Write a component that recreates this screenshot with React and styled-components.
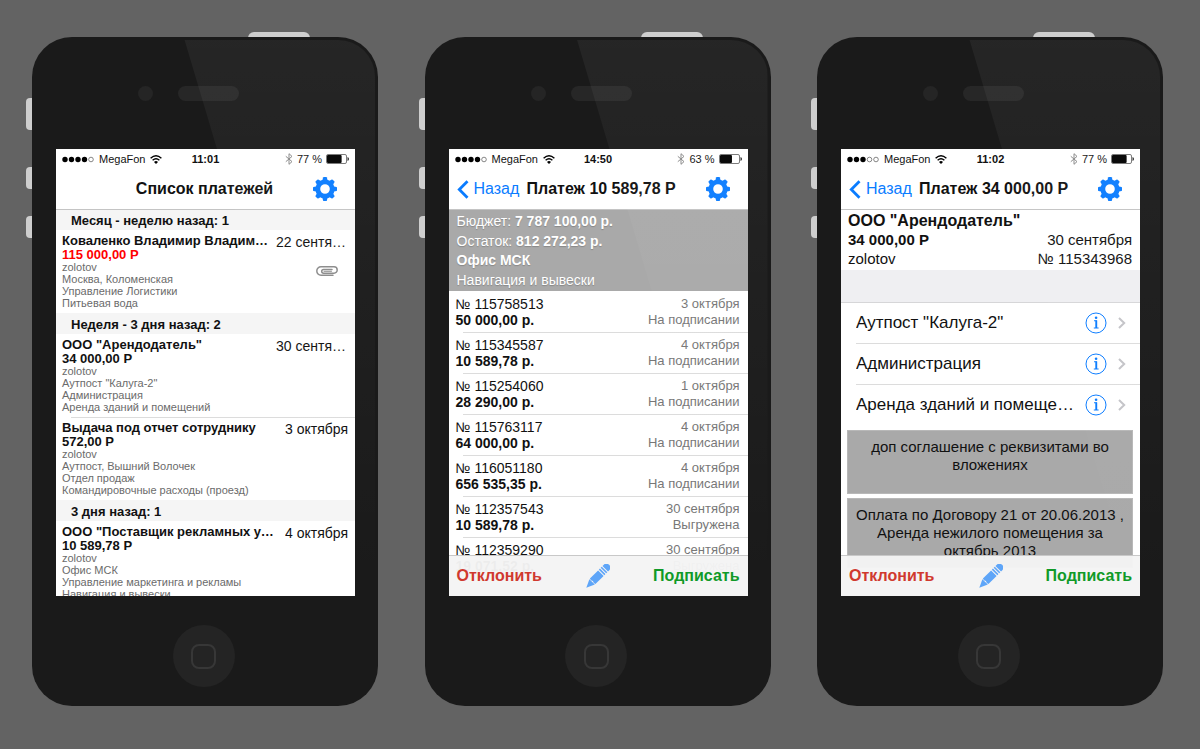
import React from 'react';
import styled, { createGlobalStyle } from 'styled-components';

const Global = createGlobalStyle`
  *, *::before, *::after { box-sizing: border-box; }
  body {
    margin: 0;
    background: #636363;
    font-family: "Liberation Sans", Arial, sans-serif;
    color: #111;
  }
  h1, h2, p, ul, dl, dd { margin: 0; padding: 0; }
  ul { list-style: none; }
`;

const Stage = styled.main`
  display: flex;
  flex-wrap: wrap;
  justify-content: space-between;
  gap: 40px;
  min-height: 100vh;
  padding: 37px 37px 37px 32px;
`;

const Device = styled.article`
  position: relative;
  flex: 0 1 346px;
  min-width: 320px;
  align-self: flex-start;
`;

const TopKey = styled.span`
  position: absolute;
  top: -5px;
  right: 68px;
  width: 62px;
  height: 16px;
  border-radius: 6px;
  background: #cecece;
`;

const SideKey = styled.span`
  position: absolute;
  left: -6px;
  top: ${(p) => p.$top}px;
  width: 16px;
  height: ${(p) => p.$h}px;
  border-radius: 4px;
  background: #cecece;
`;

const Body = styled.div`
  position: relative;
  display: flex;
  flex-direction: column;
  padding: 0 23px 0 24px;
  border-radius: 40px;
  background: #1a1a1a;
`;

const Glare = styled.div`
  position: absolute;
  inset: 3px;
  border-radius: 37px;
  background: linear-gradient(rgba(255, 255, 255, 0.05), rgba(255, 255, 255, 0.03) 30%, rgba(255, 255, 255, 0) 82%);
  clip-path: polygon(44% 0, 100% 0, 100% 100%, 102% 100%);
  pointer-events: none;
`;

const Forehead = styled.div`
  display: flex;
  align-items: center;
  gap: 25px;
  height: 112px;
  padding-left: 82px;
`;

const Camera = styled.span`
  width: 15px;
  height: 15px;
  border-radius: 50%;
  background: #252525;
`;

const Speaker = styled.span`
  width: 61px;
  height: 15px;
  border-radius: 8px;
  background: #272727;
`;

const Chin = styled.div`
  display: grid;
  place-items: center;
  height: 110px;
  padding: 10px 4px 0 0;
`;

const HomeButton = styled.button`
  display: grid;
  place-items: center;
  width: 62px;
  height: 62px;
  padding: 0;
  border: 0;
  border-radius: 50%;
  background: #242424;
  &::before {
    content: "";
    width: 25px;
    height: 25px;
    border: 2px solid #373737;
    border-radius: 8px;
  }
`;

const Screen = styled.section`
  display: flex;
  flex-direction: column;
  height: 447px;
  overflow: hidden;
  background: #fff;
`;

const StatusBar = styled.div`
  display: grid;
  grid-template-columns: 1fr auto 1fr;
  align-items: center;
  flex: none;
  height: 20px;
  padding: 0 6px;
  font-size: 11px;
  line-height: 20px;
`;

const StatusGroup = styled.div`
  display: flex;
  align-items: center;
  justify-content: ${(p) => (p.$end ? 'flex-end' : 'flex-start')};
  gap: ${(p) => (p.$end ? 4 : 5)}px;
  white-space: nowrap;
`;

const Clock = styled.strong`
  font-size: 11px;
`;

const NavBar = styled.header`
  position: relative;
  display: grid;
  grid-template-columns: ${(p) => (p.$back ? '70px 1fr 40px' : '40px 1fr 40px')};
  align-items: center;
  flex: none;
  height: 40px;
  padding: 0 10px 0 8px;
  box-shadow: 0 1px 0 #c4c4c4;
`;

const Title = styled.h1`
  font-size: 16px;
  line-height: 20px;
  font-weight: 700;
  white-space: nowrap;
  text-align: ${(p) => (p.$left ? 'left' : 'center')};
`;

const PlainButton = styled.button`
  display: flex;
  align-items: center;
  justify-content: center;
  gap: 5px;
  padding: 0;
  border: 0;
  background: none;
  color: #0a7cff;
  font: 16px/20px "Liberation Sans", Arial, sans-serif;
`;

const BackButton = styled(PlainButton)`
  justify-content: flex-start;
`;

const Scroll = styled.div`
  flex: 1;
  min-height: 0;
  overflow: hidden;
`;

const SectionTitle = styled.h2`
  height: 21px;
  padding-left: 15px;
  background: #f5f5f5;
  font-size: 13px;
  line-height: 23px;
`;

const Payment = styled.li`
  position: relative;
  display: flex;
  justify-content: space-between;
  gap: 6px;
  height: 83px;
  padding: 4px 7px 0 6px;
  & + &::before {
    content: "";
    position: absolute;
    inset: 0 0 auto 15px;
    border-top: 1px solid #dcdcdc;
  }
`;

const PayInfo = styled.div`
  flex: 1;
  min-width: 0;
  color: #6b6b6b;
  font-size: 11px;
  line-height: 12px;
`;

const Payee = styled.strong`
  display: block;
  overflow: hidden;
  color: #111;
  font-size: 13px;
  line-height: 14px;
  white-space: nowrap;
  text-overflow: ellipsis;
`;

const Sum = styled.strong`
  display: block;
  color: ${(p) => (p.$late ? '#f00' : '#111')};
  font-size: 13px;
  line-height: 13px;
`;

const PaySide = styled.div`
  display: flex;
  flex-direction: column;
  align-items: flex-end;
  gap: 16px;
  max-width: 72px;
`;

const PayDate = styled.time`
  max-width: 100%;
  overflow: hidden;
  font-size: 14px;
  line-height: 16px;
  white-space: nowrap;
  text-overflow: ellipsis;
`;

const Attachment = styled.span`
  display: flex;
  padding-right: 10px;
`;

const Budget = styled.div`
  display: grid;
  align-content: space-between;
  flex: none;
  height: 82px;
  padding: 3px 8px 2px;
  background: #a9a9a9;
  color: #fff;
  font-size: 14px;
  line-height: 18px;
  text-shadow: 0 1px 1px #888;
`;

const Order = styled.li`
  position: relative;
  display: grid;
  grid-template-columns: 1fr auto;
  align-content: start;
  height: 41px;
  padding: 5px 8px 0 7px;
  line-height: 16px;
  font-size: 14px;
  & + &::before {
    content: "";
    position: absolute;
    inset: 0 0 auto 14px;
    border-top: 1px solid #dcdcdc;
  }
`;

const Note = styled.span`
  color: #777;
  font-size: 13px;
  text-align: right;
`;

const Toolbar = styled.footer`
  position: relative;
  display: grid;
  grid-template-columns: 1fr auto 1fr;
  align-items: center;
  flex: none;
  height: 41px;
  margin-top: -41px;
  padding: 0 8px;
  border-top: 1px solid #c8c8c8;
  background: rgba(244, 244, 244, 0.97);
`;

const Action = styled(PlainButton)`
  justify-self: ${(p) => (p.$approve ? 'end' : 'start')};
  color: ${(p) => (p.$approve ? '#109a28' : '#d0392e')};
  font-weight: 700;
`;

const Summary = styled.div`
  display: grid;
  grid-template-columns: auto 1fr;
  align-content: start;
  height: 61px;
  padding: 3px 8px 0 7px;
  font-size: 15px;
  line-height: 19px;
`;

const Recipient = styled.strong`
  grid-column: 1 / -1;
  font-size: 16px;
  line-height: 18px;
`;

const RightText = styled.span`
  text-align: right;
`;

const Spacer = styled.div`
  height: 33px;
  border-bottom: 1px solid #d6d6d8;
  background: #efeff2;
`;

const Detail = styled.li`
  display: flex;
  align-items: center;
  height: 41px;
  margin-left: 15px;
  padding-right: 14px;
  border-bottom: 1px solid ${(p) => (p.$last ? 'transparent' : '#dcdcdc')};
  font-size: 17px;
`;

const DetailName = styled.span`
  flex: 1;
  min-width: 0;
  max-width: 218px;
  overflow: hidden;
  white-space: nowrap;
  text-overflow: ellipsis;
`;

const DetailLinks = styled.span`
  display: flex;
  align-items: center;
  gap: 11px;
  margin-left: auto;
`;

const Comment = styled.p`
  min-height: 64px;
  margin: 4px 7px 0 6px;
  padding: 7px 4px;
  border: 1px solid #b8b8b8;
  background: #a9a9a9;
  font-size: 15px;
  line-height: 18px;
  text-align: center;
`;

const Gear = () => (
  <svg width="24" height="24" viewBox="-12 -12 24 24" aria-hidden="true">
    <g fill="#0a7cff">
      {[0, 45, 90, 135, 180, 225, 270, 315].map((a) => (
        <path key={a} transform={`rotate(${a})`} d="M-2.8-8L-1.9-11.5Q-1.7-12-1.2-12H1.2Q1.7-12 1.9-11.5L2.8-8Z" />
      ))}
    </g>
    <circle r="7.2" fill="none" stroke="#0a7cff" strokeWidth="4.8" />
  </svg>
);

const Signal = ({ level }) => (
  <svg width="32" height="7" viewBox="0 0 32 7" aria-hidden="true">
    {[0, 1, 2, 3, 4].map((i) => (
      <circle key={i} cx={3 + i * 6.5} cy="3.5" r={i < level ? 2.7 : 2.3} fill={i < level ? '#000' : 'none'} stroke={i < level ? 'none' : '#555'} strokeWidth="0.7" />
    ))}
  </svg>
);

const Wifi = () => (
  <svg width="12" height="9" viewBox="0 0 12 9" fill="none" stroke="#000" strokeWidth="1.4" aria-hidden="true">
    <path d="M.6 3.2Q6-1.6 11.4 3.2M2.6 5.3Q6 2.2 9.4 5.3" />
    <path d="M6 9L4 6.9Q6 5.3 8 6.9Z" fill="#000" stroke="none" />
  </svg>
);

const Bluetooth = () => (
  <svg width="8" height="12" viewBox="0 0 8 12" fill="none" stroke="#888" strokeWidth="1" aria-hidden="true">
    <path d="M.8 3.3L7 8.6L4 11.3V.7L7 3.4L.8 8.7" />
  </svg>
);

const Battery = ({ charge }) => (
  <svg width="23" height="10" viewBox="0 0 23 10" aria-hidden="true">
    <rect x=".5" y=".5" width="20" height="9" rx="1.5" fill="none" stroke="#777" />
    <rect x="1" y="1" width={19 * charge} height="8" rx="1" fill="#000" />
    <path d="M21.5 3Q23 3.5 23 5T21.5 7Z" fill="#222" />
  </svg>
);

const Clip = () => (
  <svg width="22" height="10" viewBox="0 0 22 10" fill="none" stroke="#8b8b8b" strokeWidth="1.5" strokeLinecap="round" aria-hidden="true">
    <path d="M17 9.2H5A4.2 4.2 0 0 1 5 .8H18A3.2 3.2 0 0 1 18 7.2H7.6A1.9 1.9 0 0 1 7.6 3.4H16" />
    <path d="M8 5.3H15.5" strokeWidth="1" />
  </svg>
);

const BackArrow = () => (
  <svg width="12" height="19" viewBox="0 0 12 19" fill="none" stroke="#0a7cff" strokeWidth="2.8" aria-hidden="true">
    <path d="M10.5 1.2L2.3 9.5L10.5 17.8" />
  </svg>
);

const Pencil = () => (
  <svg width="24" height="24" viewBox="0 0 24 24" aria-hidden="true">
    <g transform="translate(.3 23.7) rotate(-45)" fill="#5ea5f8">
      <path d="M0 0L8.2-3.8V3.8Z" />
      <path d="M9-3.9H20.6V3.9H9L8.6 2L9.4 0L8.6-2Z" />
      <path d="M21.6-3.9H23.2V3.9H21.6ZM24.2-3.9H25.8V3.9H24.2ZM26.8-3.9H29Q32.3-3.6 32.3 0T29 3.9H26.8Z" />
    </g>
  </svg>
);

const Info = () => (
  <svg width="22" height="22" viewBox="0 0 22 22" fill="none" stroke="#0a7cff" aria-hidden="true">
    <circle cx="11" cy="11" r="10" />
    <path d="M9 8.8H11.3V16M8.8 16H13.6" strokeWidth="1.1" />
    <path d="M11.3 8.4V16" strokeWidth="1.8" />
    <circle cx="11.1" cy="5.8" r="1.3" fill="#0a7cff" stroke="none" />
  </svg>
);

const Chevron = () => (
  <svg width="8" height="12" viewBox="0 0 8 12" fill="none" stroke="#c4c4c8" strokeWidth="2" aria-hidden="true">
    <path d="M1 1L6.2 6L1 11" />
  </svg>
);

function Phone({ status, title, back, children }) {
  return (
    <Device>
      <TopKey />
      <SideKey $top={61} $h={32} />
      <SideKey $top={130} $h={22} />
      <SideKey $top={179} $h={22} />
      <Body>
        <Forehead><Camera /><Speaker /></Forehead>
        <Screen>
          <StatusBar>
            <StatusGroup><Signal level={status.signal} />MegaFon<Wifi /></StatusGroup>
            <Clock>{status.time}</Clock>
            <StatusGroup $end><Bluetooth />{status.charge} %<Battery charge={status.charge / 100} /></StatusGroup>
          </StatusBar>
          <NavBar $back={back}>
            {back ? <BackButton type="button"><BackArrow />Назад</BackButton> : <span />}
            <Title $left={back}>{title}</Title>
            <PlainButton type="button" aria-label="Настройки"><Gear /></PlainButton>
          </NavBar>
          {children}
        </Screen>
        <Chin><HomeButton type="button" aria-label="Домой" /></Chin>
        <Glare />
      </Body>
    </Device>
  );
}

const Actions = () => (
  <Toolbar>
    <Action type="button">Отклонить</Action>
    <PlainButton type="button" aria-label="Изменить"><Pencil /></PlainButton>
    <Action type="button" $approve>Подписать</Action>
  </Toolbar>
);

const groups = [
  { title: 'Месяц - неделю назад: 1', items: [
    { name: 'Коваленко Владимир Владимирович', date: '22 сентября', sum: '115 000,00 Р', late: true, clip: true, lines: ['Москва, Коломенская', 'Управление Логистики', 'Питьевая вода'] },
  ] },
  { title: 'Неделя - 3 дня назад: 2', items: [
    { name: 'ООО "Арендодатель"', date: '30 сентября', sum: '34 000,00 Р', lines: ['Аутпост "Калуга-2"', 'Администрация', 'Аренда зданий и помещений'] },
    { name: 'Выдача под отчет сотруднику', date: '3 октября', sum: '572,00 Р', lines: ['Аутпост, Вышний Волочек', 'Отдел продаж', 'Командировочные расходы (проезд)'] },
  ] },
  { title: '3 дня назад: 1', items: [
    { name: 'ООО "Поставщик рекламных услуг"', date: '4 октября', sum: '10 589,78 Р', lines: ['Офис МСК', 'Управление маркетинга и рекламы', 'Навигация и вывески'] },
  ] },
];

const orders = [
  ['115758513', '50 000,00 р.', '3 октября', 'На подписании'],
  ['115345587', '10 589,78 р.', '4 октября', 'На подписании'],
  ['115254060', '28 290,00 р.', '1 октября', 'На подписании'],
  ['115763117', '64 000,00 р.', '4 октября', 'На подписании'],
  ['116051180', '656 535,35 р.', '4 октября', 'На подписании'],
  ['112357543', '10 589,78 р.', '30 сентября', 'Выгружена'],
  ['112359290', '19 071,52 р.', '30 сентября', 'Выгружена'],
];

const details = ['Аутпост "Калуга-2"', 'Администрация', 'Аренда зданий и помещений'];

export default function App() {
  return (
    <>
      <Global />
      <Stage>
        <Phone status={{ signal: 4, time: '11:01', charge: 77 }} title="Список платежей">
          <Scroll>
            {groups.map((g) => (
              <section key={g.title}>
                <SectionTitle>{g.title}</SectionTitle>
                <ul>
                  {g.items.map((p) => (
                    <Payment key={p.name}>
                      <PayInfo>
                        <Payee>{p.name}</Payee>
                        <Sum $late={p.late}>{p.sum}</Sum>
                        <div>zolotov</div>
                        {p.lines.map((l) => <div key={l}>{l}</div>)}
                      </PayInfo>
                      <PaySide>
                        <PayDate>{p.date}</PayDate>
                        {p.clip && <Attachment><Clip /></Attachment>}
                      </PaySide>
                    </Payment>
                  ))}
                </ul>
              </section>
            ))}
          </Scroll>
        </Phone>

        <Phone back status={{ signal: 4, time: '14:50', charge: 63 }} title="Платеж 10 589,78 Р">
          <Budget>
            <span>Бюджет: <b>7 787 100,00 р.</b></span>
            <span>Остаток: <b>812 272,23 р.</b></span>
            <b>Офис МСК</b>
            <span>Навигация и вывески</span>
          </Budget>
          <Scroll>
            <ul>
              {orders.map(([id, sum, date, state]) => (
                <Order key={id}>
                  <span>№ {id}</span><Note>{date}</Note>
                  <b>{sum}</b><Note>{state}</Note>
                </Order>
              ))}
            </ul>
          </Scroll>
          <Actions />
        </Phone>

        <Phone back status={{ signal: 3, time: '11:02', charge: 77 }} title="Платеж 34 000,00 Р">
          <Scroll>
            <Summary>
              <Recipient>ООО "Арендодатель"</Recipient>
              <b>34 000,00 Р</b><RightText>30 сентября</RightText>
              <span>zolotov</span><RightText>№ 115343968</RightText>
            </Summary>
            <Spacer />
            <ul>
              {details.map((d, i) => (
                <Detail key={d} $last={i === 2}>
                  <DetailName>{d}</DetailName>
                  <DetailLinks>
                    <PlainButton type="button" aria-label="Сведения"><Info /></PlainButton>
                    <Chevron />
                  </DetailLinks>
                </Detail>
              ))}
            </ul>
            <Comment>доп соглашение с реквизитами во вложениях</Comment>
            <Comment>Оплата по Договору 21 от 20.06.2013 , Аренда нежилого помещения за октябрь 2013</Comment>
          </Scroll>
          <Actions />
        </Phone>
      </Stage>
    </>
  );
}
